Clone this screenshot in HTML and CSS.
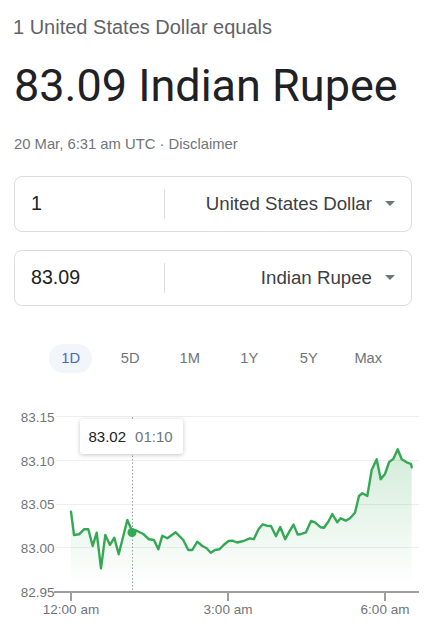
FILE: index.html
```
<!DOCTYPE html>
<html lang="en">
<head>
<meta charset="utf-8">
<title>USD to INR</title>
<link rel="stylesheet" href="styles.css">
</head>
<body>
<main class="page">
  <div class="lead">1 United States Dollar equals</div>
  <div class="rate">83.09 Indian Rupee</div>
  <div class="meta">20 Mar, 6:31 am UTC · <span class="disc">Disclaimer</span></div>

  <div class="conv">
    <div class="field">
      <div class="amount">1</div>
      <div class="sep"></div>
      <div class="currency"><span>United States Dollar</span><span class="caret"></span></div>
    </div>
    <div class="field">
      <div class="amount">83.09</div>
      <div class="sep"></div>
      <div class="currency"><span>Indian Rupee</span><span class="caret"></span></div>
    </div>
  </div>

  <nav class="ranges">
    <div class="range"><span class="pill active">1D</span></div>
    <div class="range"><span class="pill">5D</span></div>
    <div class="range"><span class="pill">1M</span></div>
    <div class="range"><span class="pill">1Y</span></div>
    <div class="range"><span class="pill">5Y</span></div>
    <div class="range"><span class="pill">Max</span></div>
  </nav>

  <div class="chart">
    <svg class="plot" width="437" height="230" viewBox="0 400 437 230">
      <defs>
        <linearGradient id="fade" gradientUnits="userSpaceOnUse" x1="0" y1="450" x2="0" y2="585">
          <stop offset="0" stop-color="#34a853" stop-opacity="0.22"/>
          <stop offset="1" stop-color="#34a853" stop-opacity="0"/>
        </linearGradient>
      </defs>
      <g class="grid">
        <line x1="56" y1="416.5" x2="419" y2="416.5"/>
        <line x1="56" y1="460.5" x2="419" y2="460.5"/>
        <line x1="56" y1="504.5" x2="419" y2="504.5"/>
        <line x1="56" y1="547.5" x2="419" y2="547.5"/>
      </g>
      <g class="ylab">
        <text x="54.5" y="421.7">83.15</text>
        <text x="54.5" y="465.5">83.10</text>
        <text x="54.5" y="509.2">83.05</text>
        <text x="54.5" y="553">83.00</text>
        <text x="54.5" y="596.7">82.95</text>
      </g>
      <path class="area" d="M71,511.7 L74,535 L79,534.3 L84,529.3 L88.3,529.3 L92.7,546 L96.7,532.7 L101,568.3 L105.3,535 L110,545 L114.3,537.7 L118.7,554.3 L127.3,520 L131.7,530 L136.7,530.7 L143.3,534 L149,539.3 L154,540 L158.3,549.3 L162.3,535.7 L167.3,538.3 L175.7,532.3 L183.3,540 L188.3,550 L192.3,550 L197.3,541.7 L202.3,546 L206.7,548.3 L210.7,552.7 L215,550 L219.3,549.3 L223.7,545 L228.5,541 L232.3,540.7 L237,542.5 L243.5,541 L249.8,538.3 L253.8,539.2 L258.5,529.3 L262.8,524.3 L266.7,525.7 L271,526 L276,536.2 L280.2,527 L285.2,539.2 L289.3,531.7 L293.5,524.6 L297.7,534.6 L300,534.3 L306,532.3 L311,521 L315,522.3 L320.7,527.3 L324,527.7 L328.3,521.7 L332.3,514 L337.3,522.3 L340.7,518.3 L345.7,520.7 L350,518.3 L355,512.7 L359,496 L362.3,493.3 L367.3,496 L371.7,470 L376.7,459.3 L380.7,479.3 L385,474 L389.3,461.7 L393.3,459 L397.7,449.3 L401.7,459.3 L406.7,462.3 L411,464 L411.7,467.3 L411.7,591 L71,591 Z"/>
      <line class="cursor" x1="132.5" y1="417" x2="132.5" y2="591"/>
      <path class="line" d="M71,511.7 L74,535 L79,534.3 L84,529.3 L88.3,529.3 L92.7,546 L96.7,532.7 L101,568.3 L105.3,535 L110,545 L114.3,537.7 L118.7,554.3 L127.3,520 L131.7,530 L136.7,530.7 L143.3,534 L149,539.3 L154,540 L158.3,549.3 L162.3,535.7 L167.3,538.3 L175.7,532.3 L183.3,540 L188.3,550 L192.3,550 L197.3,541.7 L202.3,546 L206.7,548.3 L210.7,552.7 L215,550 L219.3,549.3 L223.7,545 L228.5,541 L232.3,540.7 L237,542.5 L243.5,541 L249.8,538.3 L253.8,539.2 L258.5,529.3 L262.8,524.3 L266.7,525.7 L271,526 L276,536.2 L280.2,527 L285.2,539.2 L289.3,531.7 L293.5,524.6 L297.7,534.6 L300,534.3 L306,532.3 L311,521 L315,522.3 L320.7,527.3 L324,527.7 L328.3,521.7 L332.3,514 L337.3,522.3 L340.7,518.3 L345.7,520.7 L350,518.3 L355,512.7 L359,496 L362.3,493.3 L367.3,496 L371.7,470 L376.7,459.3 L380.7,479.3 L385,474 L389.3,461.7 L393.3,459 L397.7,449.3 L401.7,459.3 L406.7,462.3 L411,464 L411.7,467.3"/>
      <circle class="dot" cx="132" cy="532.5" r="4.5"/>
      <g class="axis">
        <line x1="54" y1="592" x2="419" y2="592"/>
        <line x1="71" y1="592" x2="71" y2="601"/>
        <line x1="228" y1="592" x2="228" y2="601"/>
        <line x1="385" y1="592" x2="385" y2="601"/>
      </g>
      <g class="xlab">
        <text x="71" y="613.5">12:00 am</text>
        <text x="228" y="613.5">3:00 am</text>
        <text x="385" y="613.5">6:00 am</text>
      </g>
    </svg>
    <div class="tip"><span class="tip-val">83.02</span><span class="tip-time">01:10</span></div>
  </div>
</main>
</body>
</html>
```
FILE: styles.css
```
body {
  margin: 0;
  background: #ffffff;
  font-family: Arial, "Liberation Sans", sans-serif;
  color: #202124;
}

.page {
  padding: 15px 25px 0 14px;
}

.lead {
  margin-left: -1px;
  font-size: 20px;
  line-height: 24px;
  color: #5f6368;
}

.rate {
  margin-top: 21px;
  font-family: Roboto, "Liberation Sans", sans-serif;
  font-size: 45px;
  line-height: 52px;
  color: #202124;
}

.meta {
  margin-top: 21.5px;
  font-size: 14.8px;
  line-height: 20px;
  color: #70757a;
}

.conv {
  margin-top: 22px;
  display: flex;
  flex-direction: column;
  gap: 18px;
}

.field {
  box-sizing: border-box;
  height: 56px;
  border: 1px solid #dadce0;
  border-radius: 8px;
  display: flex;
  align-items: center;
}

.amount {
  box-sizing: border-box;
  width: 149px;
  padding-left: 16px;
  font-size: 19.6px;
  color: #202124;
}

.sep {
  width: 1px;
  height: 30px;
  background: #dadce0;
}

.currency {
  flex: 1;
  display: flex;
  justify-content: flex-end;
  align-items: center;
  gap: 13px;
  padding-right: 16px;
  font-size: 18.7px;
  color: #3c4043;
}

.caret {
  width: 0;
  height: 0;
  border-left: 5px solid transparent;
  border-right: 5px solid transparent;
  border-top: 5px solid #70757a;
}

.ranges {
  margin-top: 38px;
  padding-left: 27px;
  display: flex;
}

.range {
  width: 59.5px;
  display: flex;
  justify-content: center;
}

.pill {
  width: 43px;
  height: 29px;
  border-radius: 15px;
  display: flex;
  align-items: center;
  justify-content: center;
  font-size: 14.7px;
  color: #70757a;
}

.pill.active {
  background: #f2f5fa;
  color: #3f67c6;
}

.chart {
  position: relative;
  margin: 27px -25px 0 -14px;
  height: 230px;
}

.plot {
  display: block;
}

.grid line {
  stroke: #eeeeee;
  stroke-width: 1;
}

.ylab text {
  font-family: Arial, "Liberation Sans", sans-serif;
  font-size: 13.5px;
  fill: #70757a;
  text-anchor: end;
}

.xlab text {
  font-family: Arial, "Liberation Sans", sans-serif;
  font-size: 13.5px;
  fill: #70757a;
  text-anchor: middle;
}

.area {
  fill: url(#fade);
  stroke: none;
}

.line {
  fill: none;
  stroke: #34a853;
  stroke-width: 2.4;
  stroke-linejoin: round;
  stroke-linecap: round;
}

.dot {
  fill: #34a853;
}

.cursor {
  stroke: #9aa0a6;
  stroke-width: 1;
  stroke-dasharray: 1.5 2;
}

.axis line {
  stroke: #9e9e9e;
  stroke-width: 2;
}

.tip {
  position: absolute;
  left: 80px;
  top: 19px;
  height: 35px;
  padding: 0 10px 0 8.5px;
  display: flex;
  align-items: center;
  gap: 9px;
  background: #ffffff;
  border-radius: 3px;
  box-shadow: 0 1px 4px rgba(60, 64, 67, 0.3);
  font-size: 15px;
}

.tip-val {
  color: #202124;
}

.tip-time {
  color: #70757a;
}
```
